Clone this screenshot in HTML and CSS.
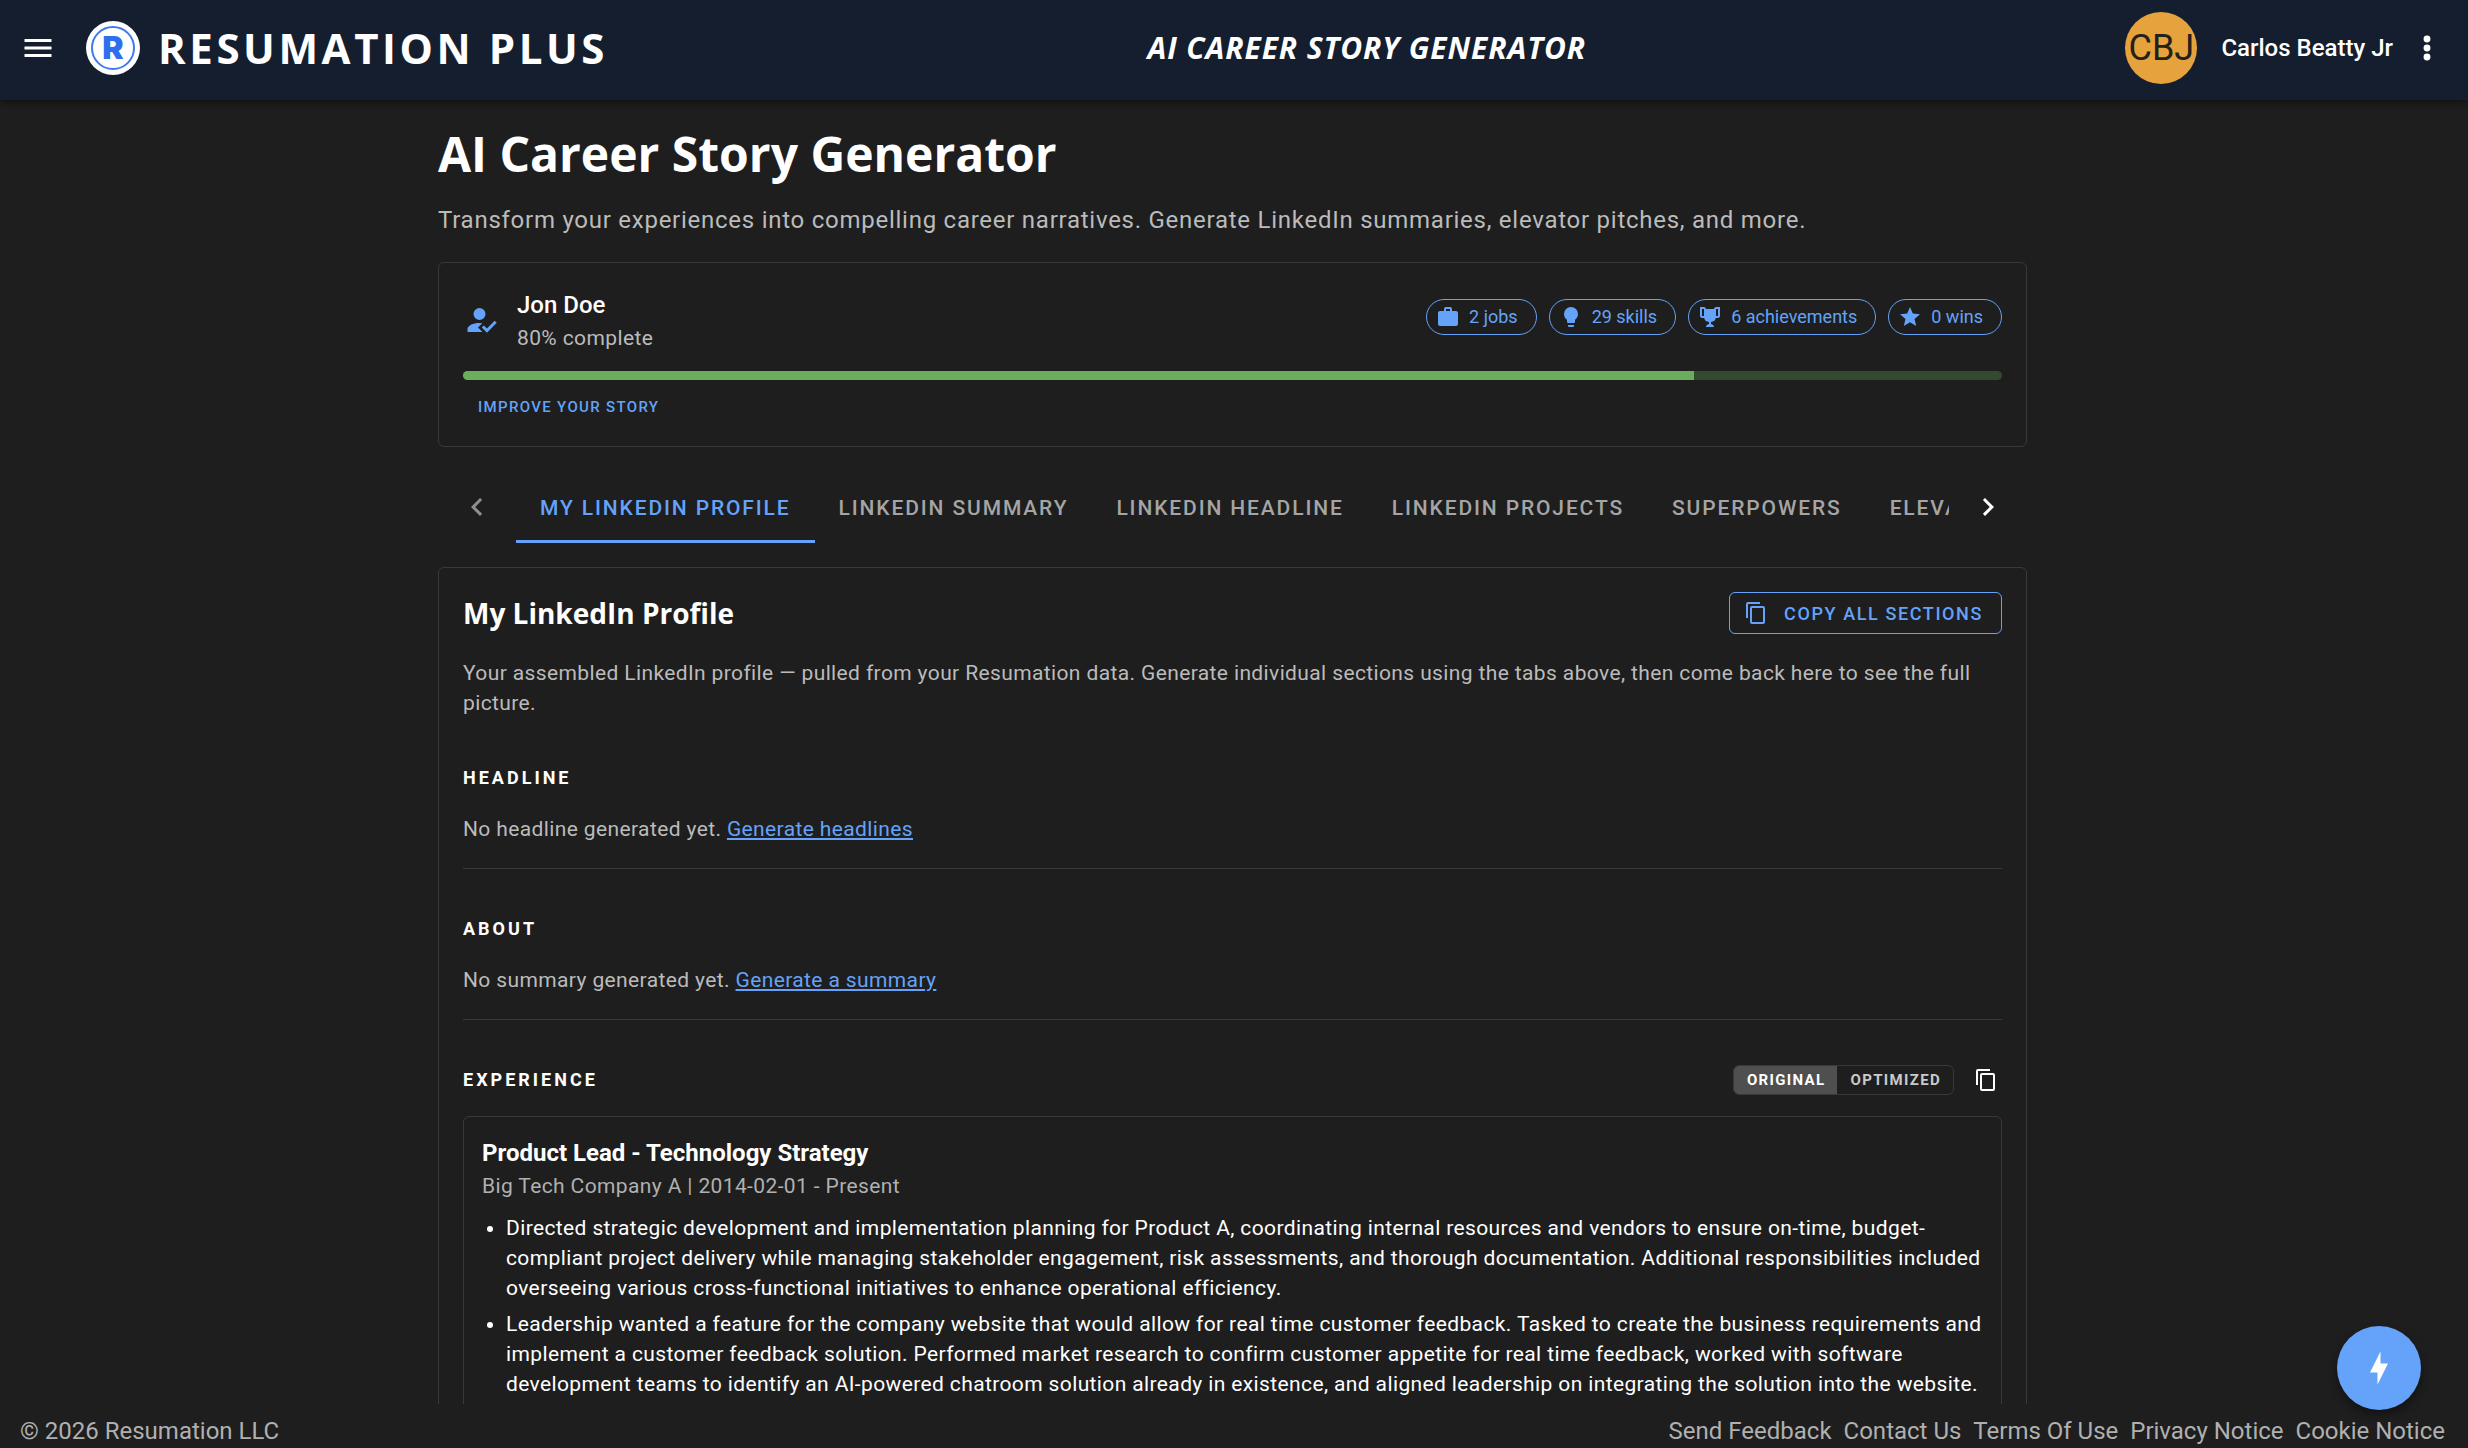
FILE: index.html
```
<!DOCTYPE html>
<html lang="en">
<head>
    <meta charset="UTF-8">
    <meta name="viewport" content="width=device-width, initial-scale=1.0">
    <title>AI Career Story Generator</title>
    <link rel="stylesheet" href="styles.css">
</head>
<body>

    <header class="app-bar">
        <div class="app-left">
            <button class="icon-btn" aria-label="Menu">
                <svg class="icon" viewBox="0 0 24 24"><path d="M3,6H21V8H3V6M3,11H21V13H3V11M3,16H21V18H3V16Z"/></svg>
            </button>
            <a href="#" class="brand">
                <svg class="logo" viewBox="0 0 54 54" aria-hidden="true">
                    <circle cx="27" cy="27" r="27" fill="#fff"/>
                    <circle cx="27" cy="27" r="21" fill="none" stroke="#3f7bec" stroke-width="2"/>
                    <text x="27" y="38" class="logo-letter">R</text>
                </svg>
                <span class="brand-name">RESUMATION PLUS</span>
            </a>
        </div>
        <div class="app-title">AI CAREER STORY GENERATOR</div>
        <div class="app-user">
            <span class="avatar">CBJ</span>
            <span class="user-name">Carlos Beatty Jr</span>
            <button class="icon-btn" aria-label="Account menu">
                <svg class="icon" viewBox="0 0 24 24"><circle cx="12" cy="6" r="2.3"/><circle cx="12" cy="12" r="2.3"/><circle cx="12" cy="18" r="2.3"/></svg>
            </button>
        </div>
    </header>

    <main class="page">
        <div class="container">
            <h1>AI Career Story Generator</h1>
            <p class="subtitle">Transform your experiences into compelling career narratives. Generate LinkedIn summaries, elevator pitches, and more.</p>

            <section class="card">
                <div class="summary">
                    <svg class="icon blue" viewBox="0 0 24 24"><path d="M21.1,12.5L22.5,13.91L15.97,20.5L12.5,17L13.9,15.59L15.97,17.67L21.1,12.5M10,17L13,20H3V18C3,15.79 6.58,14 11,14L12.89,14.11L10,17M11,4A4,4 0 0,1 15,8A4,4 0 0,1 11,12A4,4 0 0,1 7,8A4,4 0 0,1 11,4Z"/></svg>
                    <div class="person">
                        <div class="person-name">Jon Doe</div>
                        <div class="person-status">80% complete</div>
                    </div>
                    <div class="chips">
                        <span class="chip">
                            <svg class="icon-sm" viewBox="0 0 24 24"><path d="M10,2H14A2,2 0 0,1 16,4V6H20A2,2 0 0,1 22,8V19A2,2 0 0,1 20,21H4C2.89,21 2,20.1 2,19V8C2,6.89 2.89,6 4,6H8V4C8,2.89 8.89,2 10,2M14,6V4H10V6H14Z"/></svg>
                            2 jobs
                        </span>
                        <span class="chip">
                            <svg class="icon-sm" viewBox="0 0 24 24"><path d="M12,2A7,7 0 0,0 5,9C5,11.38 6.19,13.47 8,14.74V17A1,1 0 0,0 9,18H15A1,1 0 0,0 16,17V14.74C17.81,13.47 19,11.38 19,9A7,7 0 0,0 12,2M9,21A1,1 0 0,0 10,22H14A1,1 0 0,0 15,21V20H9V21Z"/></svg>
                            29 skills
                        </span>
                        <span class="chip">
                            <svg class="icon-sm" viewBox="0 0 24 24"><path d="M18 2C17.1 2 16 3 16 4H8C8 3 6.9 2 6 2H2V11C2 12 3 13 4 13H6.2C6.6 15 7.9 16.7 11 17V19.08C8 19.54 8 22 8 22H16C16 22 16 19.54 13 19.08V17C16.1 16.7 17.4 15 17.8 13H20C21 13 22 12 22 11V2H18M6 11H4V4H6V11M20 11H18V4H20V11Z"/></svg>
                            6 achievements
                        </span>
                        <span class="chip">
                            <svg class="icon-sm" viewBox="0 0 24 24"><path d="M12,17.27L18.18,21L16.54,13.97L22,9.24L14.81,8.62L12,2L9.19,8.62L2,9.24L7.45,13.97L5.82,21L12,17.27Z"/></svg>
                            0 wins
                        </span>
                    </div>
                </div>
                <progress class="progress" value="80" max="100" aria-label="Profile completion"></progress>
                <button class="btn-text">IMPROVE YOUR STORY</button>
            </section>

            <nav class="tabs">
                <button class="tabs-arrow off" aria-label="Previous tabs">
                    <svg class="icon" viewBox="0 0 24 24"><path d="M15.41,16.58L10.83,12L15.41,7.41L14,6L8,12L14,18L15.41,16.58Z"/></svg>
                </button>
                <div class="tabs-list">
                    <button class="tab active">MY LINKEDIN PROFILE</button>
                    <button class="tab">LINKEDIN SUMMARY</button>
                    <button class="tab">LINKEDIN HEADLINE</button>
                    <button class="tab">LINKEDIN PROJECTS</button>
                    <button class="tab">SUPERPOWERS</button>
                    <button class="tab">ELEVATOR PITCH</button>
                </div>
                <button class="tabs-arrow" aria-label="Next tabs">
                    <svg class="icon" viewBox="0 0 24 24"><path d="M8.59,16.58L13.17,12L8.59,7.41L10,6L16,12L10,18L8.59,16.58Z"/></svg>
                </button>
            </nav>

            <section class="card">
                <div class="card-head">
                    <h2>My LinkedIn Profile</h2>
                    <button class="btn-outlined">
                        <svg class="icon-sm" viewBox="0 0 24 24"><path d="M19,21H8V7H19M19,5H8A2,2 0 0,0 6,7V21A2,2 0 0,0 8,23H19A2,2 0 0,0 21,21V7A2,2 0 0,0 19,5M16,1H4A2,2 0 0,0 2,3V17H4V3H16V1Z"/></svg>
                        COPY ALL SECTIONS
                    </button>
                </div>
                <p class="text">Your assembled LinkedIn profile — pulled from your Resumation data. Generate individual sections using the tabs above, then come back here to see the full picture.</p>

                <div class="block">
                    <div class="block-head"><h3>HEADLINE</h3></div>
                    <p class="text">No headline generated yet. <a href="#">Generate headlines</a></p>
                </div>

                <div class="block">
                    <div class="block-head"><h3>ABOUT</h3></div>
                    <p class="text">No summary generated yet. <a href="#">Generate a summary</a></p>
                </div>

                <div class="block">
                    <div class="block-head">
                        <h3>EXPERIENCE</h3>
                        <div class="toggle">
                            <button class="toggle-btn active">ORIGINAL</button>
                            <button class="toggle-btn">OPTIMIZED</button>
                        </div>
                        <button class="copy-btn" aria-label="Copy experience">
                            <svg class="icon-sm" viewBox="0 0 24 24"><path d="M19,21H8V7H19M19,5H8A2,2 0 0,0 6,7V21A2,2 0 0,0 8,23H19A2,2 0 0,0 21,21V7A2,2 0 0,0 19,5M16,1H4A2,2 0 0,0 2,3V17H4V3H16V1Z"/></svg>
                        </button>
                    </div>
                    <article class="job">
                        <h4>Product Lead - Technology Strategy</h4>
                        <div class="job-meta">Big Tech Company A | 2014-02-01 - Present</div>
                        <ul>
                            <li>Directed strategic development and implementation planning for Product A, coordinating internal resources and vendors to ensure on-time, budget-compliant project delivery while managing stakeholder engagement, risk assessments, and thorough documentation. Additional responsibilities included overseeing various cross-functional initiatives to enhance operational efficiency.</li>
                            <li>Leadership wanted a feature for the company website that would allow for real time customer feedback. Tasked to create the business requirements and implement a customer feedback solution. Performed market research to confirm customer appetite for real time feedback, worked with software development teams to identify an AI-powered chatroom solution already in existence, and aligned leadership on integrating the solution into the website.</li>
                        </ul>
                    </article>
                </div>
            </section>
        </div>
    </main>

    <footer class="footer">
        <span>© 2026 Resumation LLC</span>
        <div class="footer-links">
            <a href="#">Send Feedback</a>
            <a href="#">Contact Us</a>
            <a href="#">Terms Of Use</a>
            <a href="#">Privacy Notice</a>
            <a href="#">Cookie Notice</a>
        </div>
    </footer>

    <button class="fab" aria-label="Quick actions">
        <svg class="icon" viewBox="0 0 24 24"><path d="M11 15H6L13 1V9H18L11 23V15Z"/></svg>
    </button>

</body>
</html>
```

FILE: styles.css
```
* {
    margin: 0;
    padding: 0;
    box-sizing: border-box;
}

body {
    display: flex;
    flex-direction: column;
    height: 100vh;
    background-color: #1e1e1e;
    color: #fff;
    font-family: Roboto, sans-serif;
    font-size: 21px;
    line-height: 30px;
}

button {
    background: none;
    border: none;
    color: inherit;
    font-family: inherit;
    cursor: pointer;
}

svg {
    display: block;
    flex-shrink: 0;
    fill: currentColor;
}

.icon {
    width: 36px;
    height: 36px;
}

.icon-sm {
    width: 24px;
    height: 24px;
}

.blue {
    color: #64a3f9;
}

/* Top bar */
.app-bar {
    position: relative;
    z-index: 1;
    flex-shrink: 0;
    display: flex;
    align-items: center;
    justify-content: space-between;
    height: 100px;
    padding: 0 23px 4px 20px;
    background-color: #141e2f;
    box-shadow: 0 3px 6px rgba(0, 0, 0, 0.4);
}

.app-left,
.app-user {
    display: flex;
    align-items: center;
}

.brand {
    display: flex;
    align-items: center;
    gap: 18px;
    margin-left: 30px;
    color: #fff;
    text-decoration: none;
}

.logo {
    width: 54px;
    height: 54px;
}

.logo-letter {
    fill: #2f6fed;
    font-family: Inter, sans-serif;
    font-size: 32px;
    font-weight: 900;
    text-anchor: middle;
}

.brand-name {
    font-family: "Open Sans", sans-serif;
    font-size: 42px;
    font-weight: 700;
    line-height: 54px;
    letter-spacing: 0.085em;
}

.app-title {
    font-family: "Open Sans", sans-serif;
    font-size: 30px;
    font-weight: 700;
    font-style: italic;
    letter-spacing: 0.03em;
}

.avatar {
    width: 72px;
    height: 72px;
    border-radius: 50%;
    background-color: #e6a23c;
    color: #24211b;
    font-size: 36px;
    line-height: 72px;
    text-align: center;
}

.user-name {
    margin: 0 16px 0 24px;
    font-size: 24px;
    font-weight: 500;
}

/* Page content scrolls between the bar and the footer */
.page {
    flex: 1;
    min-height: 0;
    overflow-y: auto;
    scrollbar-width: none;
    padding: 24px 3px 24px 0;
}

.container {
    max-width: 1589px;
    margin: 0 auto;
}

h1 {
    margin-bottom: 18px;
    font-family: "Open Sans", sans-serif;
    font-size: 48px;
    line-height: 60px;
}

.subtitle {
    margin-bottom: 24px;
    color: #bbb;
    font-size: 24px;
    line-height: 36px;
    letter-spacing: 0.031em;
}

.card {
    padding: 24px;
    border: 1px solid #393939;
    border-radius: 6px;
}

.summary {
    display: flex;
    align-items: center;
    margin-bottom: 18px;
}

.person {
    flex: 1;
    margin-left: 18px;
}

.person-name {
    font-size: 24px;
    font-weight: 500;
    line-height: 36px;
}

.person-status {
    color: #bbb;
    letter-spacing: 0.018em;
}

.chips {
    display: flex;
    gap: 12px;
    padding-bottom: 6px;
}

.chip {
    display: flex;
    align-items: center;
    gap: 9px;
    height: 36px;
    padding: 0 18px 0 9px;
    border: 1px solid #64a3f9;
    border-radius: 18px;
    color: #64a3f9;
    font-size: 18px;
}

.progress {
    display: block;
    width: 100%;
    height: 9px;
    margin-bottom: 12px;
    border: none;
    border-radius: 5px;
    overflow: hidden;
    appearance: none;
}

.progress::-webkit-progress-bar {
    background-color: #334a2f;
}

.progress::-webkit-progress-value {
    background-color: #6aad5c;
}

.btn-text {
    display: block;
    height: 30px;
    padding: 0 15px;
    color: #64a3f9;
    font-size: 15px;
    font-weight: 500;
    letter-spacing: 0.089em;
}

/* Tabs */
.tabs {
    display: flex;
    margin: 24px 0;
}

.tabs-arrow {
    display: flex;
    align-items: center;
    justify-content: center;
    flex: 0 0 78px;
}

.tabs-arrow.off {
    color: #8f8f8f;
}

.tabs-list {
    display: flex;
    flex: 1;
    min-width: 0;
    overflow: hidden;
}

.tab {
    flex-shrink: 0;
    height: 72px;
    padding: 2px 24px 0;
    border-bottom: 3px solid transparent;
    border-top: 3px solid transparent;
    color: #a5a5a5;
    font-size: 21px;
    font-weight: 500;
    letter-spacing: 0.089em;
}

.tab.active {
    border-bottom-color: #64a3f9;
    color: #64a3f9;
}

/* Profile card */
.card-head {
    display: flex;
    align-items: center;
    justify-content: space-between;
    margin-bottom: 24px;
}

h2 {
    font-family: "Open Sans", sans-serif;
    font-size: 28px;
    line-height: 42px;
}

.btn-outlined {
    display: flex;
    align-items: center;
    gap: 16px;
    height: 42px;
    padding: 0 18px 0 14px;
    border: 1px solid #64a3f9;
    border-radius: 6px;
    color: #64a3f9;
    font-size: 18px;
    font-weight: 500;
    letter-spacing: 0.089em;
}

.text {
    color: #bbb;
    letter-spacing: 0.018em;
}

.text a {
    color: #64a3f9;
}

.block {
    padding: 36px 0 24px;
    border-bottom: 1px solid #393939;
}

.block-head {
    display: flex;
    align-items: center;
    height: 48px;
    margin-bottom: 12px;
}

h3 {
    flex: 1;
    font-size: 18px;
    font-weight: 700;
    letter-spacing: 0.167em;
}

.toggle {
    display: flex;
    height: 30px;
    border: 1px solid #393939;
    border-radius: 6px;
    overflow: hidden;
}

.toggle-btn {
    padding: 0 12px 0 13px;
    color: #c9c9c9;
    font-size: 15px;
    font-weight: 700;
    letter-spacing: 0.089em;
}

.toggle-btn.active {
    background-color: #4f4f4f;
    color: #fff;
}

.copy-btn {
    margin-left: 16px;
    padding: 4px;
}

.job {
    padding: 18px;
    border: 1px solid #393939;
    border-radius: 6px;
}

h4 {
    font-size: 24px;
    line-height: 36px;
}

.job-meta {
    color: #b0b0b0;
    letter-spacing: 0.018em;
}

ul {
    margin-top: 12px;
    padding-left: 24px;
    letter-spacing: 0.018em;
}

li {
    margin-bottom: 6px;
}

/* Footer */
.footer {
    flex-shrink: 0;
    display: flex;
    justify-content: space-between;
    padding: 10px 23px 0 20px;
    color: #b0b0b0;
    font-size: 24px;
    line-height: 34px;
}

.footer-links {
    display: flex;
    gap: 12px;
}

.footer a {
    color: inherit;
    text-decoration: none;
}

.fab {
    position: fixed;
    right: 47px;
    bottom: 38px;
    z-index: 2;
    display: flex;
    align-items: center;
    justify-content: center;
    width: 84px;
    height: 84px;
    border-radius: 50%;
    background-color: #64a3f9;
    box-shadow: 0 5px 10px rgba(0, 0, 0, 0.4);
}
```
